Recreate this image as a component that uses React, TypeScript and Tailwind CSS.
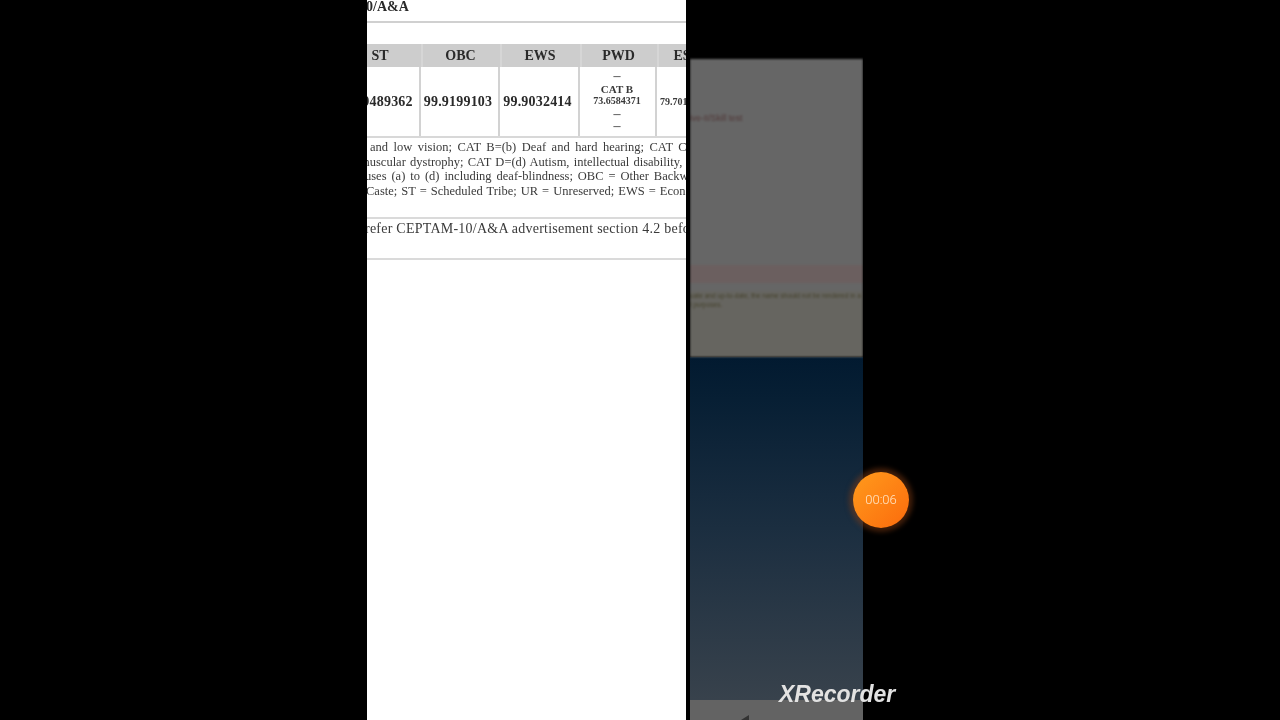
const serif = "font-['Liberation_Serif',serif]";

function NoteLine({ className, children }: { className: string; children: string }) {
  return <div className={`h-[14.7px] leading-[14.7px] whitespace-nowrap ${className}`}>{children}</div>;
}

const dataCell = "flex h-[69px] items-center justify-center border-r-2 border-[#d2d2d2] pr-[3px] text-[14px] font-bold tracking-[0.2px]";

export default function App() {
  return (
    <div className={`relative flex h-[720px] w-[1280px] overflow-hidden bg-black ${serif}`}>
      <div className="w-[367px] shrink-0" />

      <main className="flex h-full w-[319px] shrink-0 flex-col overflow-hidden bg-white text-[#2a2a2a] blur-[0.6px]">
        <div className="-ml-[1px] h-[21px] text-[14px] font-bold leading-[14px] whitespace-nowrap">0/A&amp;A</div>
        <div className="h-[2px] bg-[#d0d0d0]" />
        <div className="h-[21px]" />

        <div className="-ml-[26px] grid w-[366px] grid-cols-[80px_79px_80px_77px_50px] text-center">
          {["ST", "OBC", "EWS", "PWD", "ES"].map((h, i) => (
            <div
              key={h}
              className={`flex h-[23px] items-center justify-center bg-[#cdcdcd] pr-[2px] text-[14px] font-bold ${i === 0 ? "" : "border-l-2 border-[#d6d6d6]"}`}
            >
              {h}
            </div>
          ))}
          <div className={dataCell}>99.9489362</div>
          <div className={dataCell}>99.9199103</div>
          <div className={dataCell}>99.9032414</div>
          <div className="flex h-[69px] flex-col items-center justify-center border-r-2 border-[#d2d2d2] pr-[1px] text-[10px] font-bold leading-[12.6px] text-[#3a3a3a]">
            <span className="text-[14px] text-[#666666]">–</span>
            <span className="text-[11px]">CAT B</span>
            <span>73.6584371</span>
            <span className="text-[14px] text-[#666666]">–</span>
            <span className="text-[14px] text-[#666666]">–</span>
          </div>
          <div className="flex h-[69px] items-center justify-start whitespace-nowrap pl-[3px] text-[10px] font-bold text-[#3a3a3a]">79.7012345</div>
        </div>
        <div className="h-[2px] bg-[#d8d8d8]" />

        <div className="pt-[2px] text-[12.5px] text-[#3a3a3a]">
          <NoteLine className="ml-[3px] [word-spacing:2.4px]">and low vision; CAT B=(b) Deaf and hard hearing; CAT C</NoteLine>
          <NoteLine className="-ml-[7px] [word-spacing:1.1px]">muscular dystrophy; CAT D=(d) Autism, intellectual disability,</NoteLine>
          <NoteLine className="-ml-[2px] [word-spacing:1.8px]">uses (a) to (d) including deaf-blindness; OBC = Other Backward</NoteLine>
          <NoteLine className="-ml-[1px] [word-spacing:0.9px]">Caste; ST = Scheduled Tribe; UR = Unreserved; EWS = Economically</NoteLine>
        </div>

        <div className="mt-[18px] h-[2px] bg-[#dadada]" />
        <div className="mt-[1px] -ml-[2px] h-[17px] whitespace-nowrap text-[14px] leading-[17px] tracking-[0.24px] text-[#3a3a3a]">refer CEPTAM-10/A&amp;A advertisement section 4.2 before</div>
        <div className="mt-[21px] h-[2px] bg-[#dadada]" />
      </main>

      <div className="w-[4px] shrink-0" />

      <aside className="flex h-full w-[173px] shrink-0 flex-col overflow-hidden pt-[59px]">
        <div className="flex h-[298px] flex-col bg-[#666666] font-['Liberation_Sans',sans-serif] blur-[0.8px]">
          <div className="mt-[54px] h-[10px] whitespace-nowrap text-[8.5px] leading-[10px] text-[#503636]">ive-II/Skill test</div>
          <div className="mt-[142px] h-[18px] bg-[#6b5f5f]" />
          <div className="mt-[8px] flex flex-1 flex-col bg-[#666560] whitespace-nowrap text-[6.6px] leading-[9px] text-[#45422c]">
            <div>uate and up-to-date, the name should not be rendered in a</div>
            <div>l purposes.</div>
          </div>
        </div>
        <div className="h-[343px] bg-gradient-to-b from-[#021a30] via-[#1b2e40] to-[#38424c]" />
        <div className="relative flex h-[20px] items-end justify-center bg-[#636363]">
          <svg width="12" height="5" viewBox="0 0 12 5" className="mr-[62px]">
            <path d="M1 5 L9 0 V5 Z" fill="#333" />
          </svg>
        </div>
      </aside>

      <div className="absolute left-[853px] top-[472px] flex h-[56px] w-[56px] items-center justify-center rounded-full bg-gradient-to-br from-[#ff9a1c] to-[#fb6a0c] font-['Roboto',sans-serif] text-[13px] font-light text-[#ffe6c8] shadow-[0_0_5px_4px_rgba(130,60,20,0.5)] blur-[0.3px]">
        00:06
      </div>
      <div className="absolute left-[779px] top-[681px] font-['Liberation_Sans',sans-serif] text-[23px] font-bold italic leading-[26px] text-[#e2e2e2] blur-[0.4px]">
        XRecorder
      </div>
    </div>
  );
}
